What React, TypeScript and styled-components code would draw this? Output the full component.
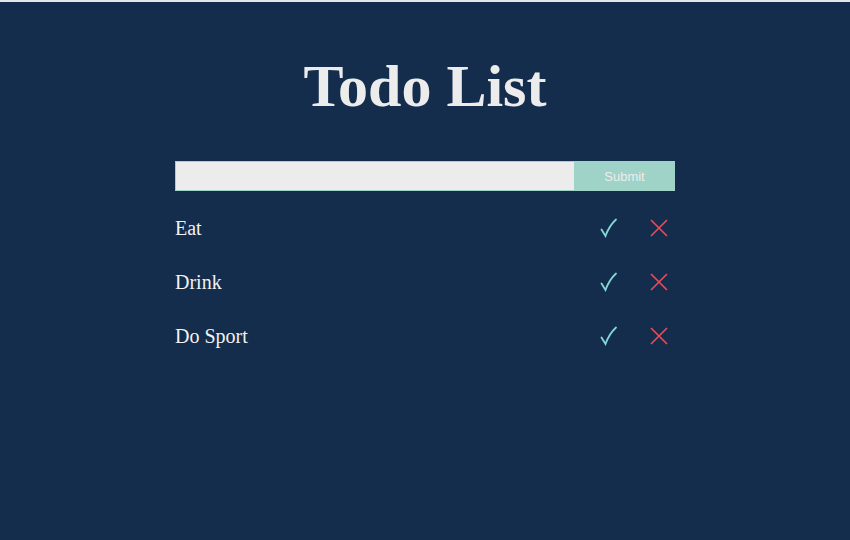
import React from "react";
import styled, { createGlobalStyle } from "styled-components";

const Global = createGlobalStyle`
  html, body { margin: 0; padding: 0; }
  body {
    background: #142d4c;
    border-top: 2px solid #e6e7ea;
    min-height: 540px;
    box-sizing: border-box;
    font-family: "Liberation Serif", "Times New Roman", serif;
    color: #ececec;
  }
`;

const Wrapper = styled.div`
  width: 500px;
  margin: 0 auto;
  display: flex;
  flex-direction: column;
`;

const Title = styled.h1`
  margin: 48px 0 39px;
  text-align: center;
  font-size: 60px;
  line-height: 72px;
  font-weight: bold;
  color: #ececec;
`;

const Form = styled.form`
  display: flex;
  height: 30px;
  margin: 0;
`;

const Input = styled.input`
  flex: 1;
  box-sizing: border-box;
  height: 30px;
  border: 1px solid #9fd3c7;
  border-right: none;
  background: #ececec;
  outline: none;
  padding: 0 8px;
  margin: 0;
`;

const Button = styled.button`
  width: 101px;
  height: 30px;
  border: none;
  margin: 0;
  background: #9fd3c7;
  color: #ececec;
  font-family: "Liberation Sans", Arial, sans-serif;
  font-size: 13px;
  cursor: pointer;
`;

const List = styled.ul`
  list-style: none;
  margin: 10px 0 0;
  padding: 0;
`;

const Item = styled.li`
  height: 54px;
  display: flex;
  align-items: center;
  justify-content: space-between;
  font-size: 20px;
  color: #f2f2f2;
`;

const Actions = styled.div`
  display: flex;
  align-items: center;
  gap: 32px;
  padding-right: 7px;
`;

const IconButton = styled.span<{ $color: string }>`
  display: inline-flex;
  width: 18px;
  height: 24px;
  align-items: center;
  justify-content: center;
  color: ${(p) => p.$color};
`;

const Check = () => (
  <svg width="18" height="20" viewBox="0 0 18 20">
    <path d="M1.5 11.5 L5.5 18 Q9 8 16 1.5" fill="none" stroke="currentColor" strokeWidth="1.8" strokeLinecap="round" />
  </svg>
);

const Cross = () => (
  <svg width="18" height="18" viewBox="0 0 18 18">
    <path d="M1 1 L17 17 M17 1 L1 17" stroke="currentColor" strokeWidth="1.7" />
  </svg>
);

const todos = ["Eat", "Drink", "Do Sport"];

export default function App() {
  return (
    <>
      <Global />
      <Wrapper>
        <Title>Todo List</Title>
        <Form onSubmit={(e) => e.preventDefault()}>
          <Input type="text" />
          <Button type="submit">Submit</Button>
        </Form>
        <List>
          {todos.map((t) => (
            <Item key={t}>
              <span>{t}</span>
              <Actions>
                <IconButton $color="#86d6d6"><Check /></IconButton>
                <IconButton $color="#ea4a5a"><Cross /></IconButton>
              </Actions>
            </Item>
          ))}
        </List>
      </Wrapper>
    </>
  );
}
